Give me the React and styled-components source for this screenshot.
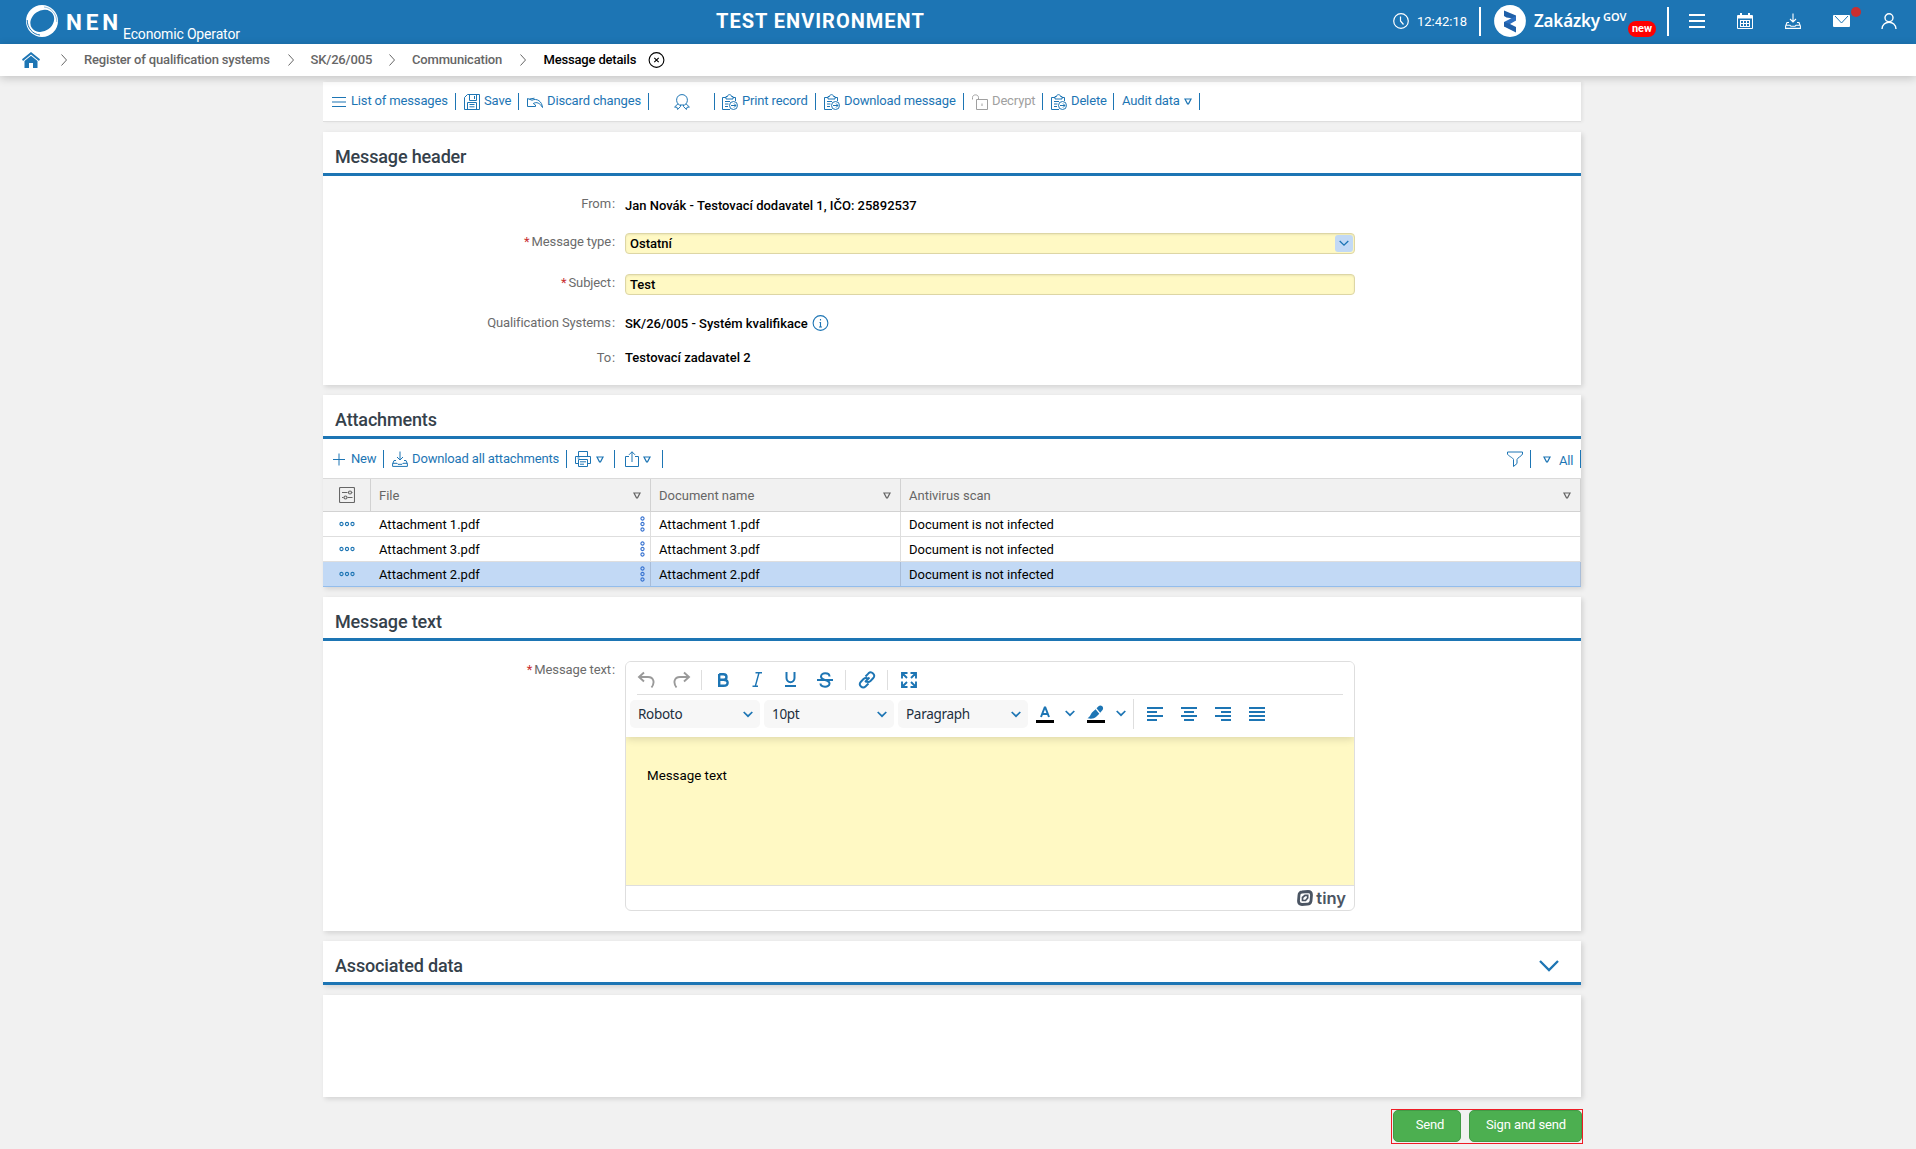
import React from "react";
import styled, { createGlobalStyle, css } from "styled-components";

const BLUE = "#1d75b4";

const Global = createGlobalStyle`
  * { box-sizing: border-box; }
  html, body { margin: 0; padding: 0; }
  body {
    background: #f1f1f1;
    font-family: Roboto, "Liberation Sans", sans-serif;
    font-size: 13px;
    color: #000;
    overflow: hidden;
  }
`;

const Page = styled.div`
  width: 1916px;
  height: 1149px;
  overflow: hidden;
`;

const Svg = styled.svg`
  display: block;
  flex: none;
  fill: none;
  stroke: currentColor;
  stroke-width: ${(p) => p.$sw ?? 1};
`;

const Icon = ({ w = 16, h = 16, sw, children }) => (
  <Svg width={w} height={h} viewBox={`0 0 ${w} ${h}`} $sw={sw}>
    {children}
  </Svg>
);

/* ---------- top bar ---------- */

const TopBar = styled.header`
  display: grid;
  grid-template-columns: 716px 1fr 523px;
  height: 44px;
  background: ${BLUE};
  color: #fff;
`;

const Brand = styled.div`
  display: flex;
  align-items: flex-start;
  padding: 5px 0 0 26px;
`;

const BrandName = styled.span`
  margin: 3px 0 0 8px;
  width: 57px;
  font-size: 22.5px;
  line-height: 28px;
  font-weight: 700;
  letter-spacing: 3.9px;
`;

const BrandRole = styled.span`
  margin-top: 19px;
  font-size: 14px;
  line-height: 20px;
  letter-spacing: -0.16px;
  white-space: nowrap;
`;

const EnvTitle = styled.div`
  font-size: 20px;
  font-weight: 700;
  line-height: 43px;
  letter-spacing: 1px;
  white-space: nowrap;
`;

const TopTools = styled.div`
  display: flex;
  align-items: center;
  height: 42px;
`;

const Clock = styled.div`
  display: flex;
  align-items: center;
  gap: 8px;
  width: 86px;
  font-size: 13px;
`;

const Bar = styled.span`
  width: 2px;
  height: 29px;
  margin-top: 1px;
  background: #fff;
`;

const Portal = styled.div`
  display: flex;
  align-items: center;
  width: 186px;
  padding-left: 13px;
  font-family: "Noto Sans", "Open Sans", sans-serif;
  font-weight: 600;
`;

const PortalName = styled.span`
  margin-left: 8px;
  width: 69px;
  font-size: 17px;
  line-height: 24px;
  letter-spacing: -0.2px;
`;

const PortalSup = styled.span`
  width: 25px;
  font-size: 11px;
  line-height: 12px;
  margin-bottom: 8px;
`;

const NewBadge = styled.span`
  width: 28px;
  height: 16px;
  margin-top: 16px;
  border-radius: 8px;
  background: #f00;
  font: 700 11px/15px Roboto, sans-serif;
  text-align: center;
`;

const ToolButton = styled.span`
  display: flex;
  justify-content: center;
  width: 48px;
`;

const ToolRow = styled.div`
  display: flex;
  align-items: center;
  padding-left: 4px;
`;

const MailWrap = styled.span`
  position: relative;
  display: block;
`;

const Dot = styled.span`
  position: absolute;
  left: 18px;
  top: -8px;
  width: 10px;
  height: 10px;
  border-radius: 50%;
  background: #c92f31;
`;

/* ---------- breadcrumb ---------- */

const Crumbs = styled.nav`
  position: relative;
  display: flex;
  align-items: center;
  height: 32px;
  padding-left: 22px;
  background: #fff;
  box-shadow: 0 2px 10px rgba(0, 0, 0, 0.2);
  font-size: 13px;
  font-weight: 500;
  color: #666;
`;

const Crumb = styled.span`
  width: ${(p) => p.$w}px;
  margin-top: -1px;
  white-space: nowrap;
  letter-spacing: -0.17px;
  color: ${(p) => (p.$current ? "#000" : "inherit")};
`;

const CrumbSep = styled.span`
  display: flex;
  width: ${(p) => p.$w || 23}px;
  color: #666;
`;

/* ---------- panels ---------- */

const Content = styled.main`
  width: 1258px;
  margin: 6px 0 0 323px;
`;

const Panel = styled.section`
  height: ${(p) => p.$h}px;
  margin-bottom: 10px;
  background: #fff;
  box-shadow: 2px 2px 5px rgba(0, 0, 0, 0.13);
`;

const ActionPanel = styled.div`
  display: flex;
  height: 40px;
  margin-bottom: 10px;
  padding-top: 11px;
  background: #fff;
  border-bottom: 1px solid #dedede;
  box-shadow: 2px 0 3px rgba(0, 0, 0, 0.06);
`;

const PanelHead = styled.div`
  display: flex;
  justify-content: space-between;
  align-items: center;
  height: 44px;
  padding: 6px 22px 0 12px;
  border-bottom: 3px solid ${BLUE};
  color: #35414b;
`;

const PanelTitle = styled.h2`
  margin: 3px 0 0;
  font-size: 18px;
  line-height: 22px;
  font-weight: 500;
  letter-spacing: -0.15px;
`;

const Action = styled.button`
  display: flex;
  align-items: center;
  gap: ${(p) => p.$gap ?? 4}px;
  width: ${(p) => p.$w}px;
  height: ${(p) => p.$h || 17}px;
  padding: 0 0 0 ${(p) => p.$pl ?? 8}px;
  border: 0;
  border-right: 1px solid ${BLUE};
  background: none;
  color: ${BLUE};
  font: 400 13px/15px Roboto, sans-serif;
  white-space: nowrap;
`;

const ActionText = styled.span`
  margin-top: ${(p) => p.$mt ?? -2}px;
  letter-spacing: -0.15px;
  color: ${(p) => (p.$off ? "#a0a0a0" : "inherit")};
`;

const Muted = styled.span`
  color: #a0a0a0;
`;

/* ---------- form ---------- */

const Form = styled.div`
  padding-top: ${(p) => p.$pt || 0}px;
`;

const Field = styled.div`
  display: flex;
  height: ${(p) => p.$h}px;
`;

const Label = styled.label`
  width: 292px;
  margin: ${(p) => p.$mt || 0}px 10px 0 0;
  text-align: right;
  line-height: 20px;
  letter-spacing: -0.11px;
  color: #6b6b6b;
  white-space: nowrap;
`;

const Colon = styled.span`
  margin-left: 1px;
`;

const Star = styled.span`
  margin-right: 2px;
  color: #c92f31;
`;

const Value = styled.div`
  display: flex;
  align-items: center;
  gap: 4px;
  height: 20px;
  margin-top: ${(p) => p.$mt || 0}px;
  font-weight: 500;
  white-space: nowrap;
`;

const Input = styled.div`
  display: flex;
  align-items: center;
  justify-content: space-between;
  width: 730px;
  height: 21px;
  margin-top: 1px;
  padding: 0 1px 0 4px;
  border: 1px solid #ddd6a5;
  border-radius: 4px;
  background: #fff9c4;
  box-shadow: inset 0 1px 2px rgba(0, 0, 0, 0.08);
  font-weight: 500;
`;

const DropButton = styled.span`
  display: flex;
  align-items: center;
  justify-content: center;
  width: 18px;
  height: 17px;
  border-radius: 3px;
  background: #c2d9f5;
  color: ${BLUE};
`;

/* ---------- table ---------- */

const TableTools = styled.div`
  display: flex;
  justify-content: space-between;
  height: 39px;
  padding-top: 11px;
`;

const ToolGroup = styled.div`
  display: flex;
`;

const gridCols = css`
  display: grid;
  grid-template-columns: 48px 280px 250px 680px;
`;

const HeadRow = styled.div`
  ${gridCols}
  height: 34px;
  border-top: 1px solid #dadada;
  border-bottom: 1px solid #d2d2d2;
  background: #f1f1f1;
  color: #666;
`;

const HeadCell = styled.div`
  display: flex;
  align-items: center;
  justify-content: ${(p) => (p.$center ? "center" : "space-between")};
  padding: ${(p) => (p.$center ? "0" : "0 9px 0 8px")};
  border-right: 1px solid #d2d2d2;
`;

const Row = styled.div`
  ${gridCols}
  height: 25px;
  border-bottom: 1px solid ${(p) => (p.$sel ? "#93bdec" : "#dedede")};
  background: ${(p) => (p.$sel ? "#c2d9f5" : "#fff")};
`;

const Cell = styled.div`
  display: flex;
  align-items: center;
  justify-content: space-between;
  padding: 0 5px 0 8px;
  border-right: 1px solid ${(p) => (p.$sel ? "#a9bdd8" : "#dedede")};
`;

const MenuCell = styled.div`
  display: flex;
  align-items: center;
  justify-content: center;
  color: ${BLUE};
`;

/* ---------- editor ---------- */

const Editor = styled.div`
  width: 730px;
  height: 250px;
  border: 1px solid #dedede;
  border-radius: 6px;
  overflow: hidden;
  background: #fff;
`;

const EdRow = styled.div`
  display: flex;
  align-items: center;
  height: ${(p) => p.$h}px;
  margin: 0 11px;
  border-bottom: ${(p) => (p.$line ? "1px solid #dedede" : "0")};
  color: ${BLUE};
`;

const EdToolbar = styled.div`
  position: relative;
  height: 75px;
  background: #fff;
  box-shadow: 0 2px 8px rgba(0, 0, 0, 0.14);
`;

const EdButton = styled.span`
  display: flex;
  flex: none;
  align-items: center;
  justify-content: center;
  width: ${(p) => p.$w}px;
  height: 28px;
  margin: ${(p) => p.$mt ?? 3}px 0 0 ${(p) => p.$ml || 0}px;
  color: ${(p) => (p.$off ? "#9a9a9a" : BLUE)};
`;

const EdSep = styled.span`
  width: 1px;
  height: ${(p) => p.$h || 20}px;
  margin: 3px 0 0 ${(p) => p.$ml || 0}px;
  background: #dedede;
`;

const EdSecond = styled(EdRow)`
  margin: 0 0 0 4px;
`;

const EdSelect = styled.span`
  display: flex;
  align-items: center;
  justify-content: space-between;
  width: 130px;
  height: 28px;
  margin: 4px 4px 0 0;
  padding: 0 7px 0 8px;
  border-radius: 5px;
  background: #f7f7f7;
  font: 400 13.5px/28px "Noto Sans", sans-serif;
  letter-spacing: -0.3px;
  color: #222f3e;
`;

const EdBody = styled.div`
  height: 148px;
  padding: 29px 21px;
  background: #fff9c4;
  font-size: 13.33px;
  line-height: 20px;
`;

const EdStatus = styled.div`
  display: flex;
  align-items: center;
  justify-content: flex-end;
  gap: 3px;
  height: 25px;
  padding: 0 8px 0 0;
  border-top: 1px solid #dedede;
  color: #4b5563;
  font: 600 16.5px/22px Inter, sans-serif;
`;

/* ---------- footer buttons ---------- */

const Submit = styled.div`
  display: flex;
  gap: 8px;
  width: 192px;
  height: 35px;
  margin: 12px 0 0 1068px;
  padding-left: 1px;
  border: 1px solid #ee1c25;
`;

const GreenButton = styled.button`
  width: ${(p) => p.$w}px;
  height: 32px;
  padding: 0 0 3px ${(p) => p.$pl || 0}px;
  border: 1px solid #429a46;
  border-radius: 5px;
  background: #4caf50;
  color: #fff;
  font: 400 13px/18px Roboto, sans-serif;
  letter-spacing: -0.1px;
`;

/* ---------- icons ---------- */

const Tri = () => (
  <Icon w={8} h={7} sw={1.2}>
    <path d="M1 1H7L4.5 5.8H3.5Z" />
  </Icon>
);

const Chevron = ({ sw = 1.7 }) => (
  <Icon w={10} h={7} sw={sw}>
    <path d="M0.7 1L5 5.2L9.3 1" />
  </Icon>
);

const CrumbArrow = () => (
  <Icon w={7} h={12} sw={1}>
    <path d="M.5 .5L5.500 6L.5 11.500" />
  </Icon>
);

const ListIcon = () => (
  <Icon w={14} sw={1.1}>
    <path d="M0 3.5H14M0 8H14M0 12.5H14" />
  </Icon>
);

const SaveIcon = () => (
  <Icon>
    <path d="M3.5 .5H15.5V15.5H.5V3.5ZM5.5 .5V6.5H12.5V.5M10.5 2V5M3.5 15.5V8.5H12.5V15.5M5.5 10.5H10.5M5.5 12.8H10.5" />
  </Icon>
);

const DiscardIcon = () => (
  <Icon>
    <path d="M.5 4.500V12.500H8.500V11L6.300 9.500C9.500 7.500 13 9 15.500 13.500C15 7.500 10 3.800 5 6.200L.5 4.500M2.500 5L7.500 4.200" />
  </Icon>
);

const RibbonIcon = () => (
  <Icon sw={1}>
    <path d="M5.500 11C.8 8.500 2 .6 8 .6S15.200 8.500 10.500 11ZM4 9.800L.6 13L3 13.300L3.600 15.500L6.500 12.500V11M12 9.800L15.400 13L13 13.300L12.400 15.500L9.500 12.500V11" />
  </Icon>
);

const ClipIcon = () => (
  <Icon>
    <path d="M8 15.500H.5V3.500H4V2.500H5.500C5.500 0 9.500 0 9.500 2.500H11V3.500H13.500V7M4 3.500V5H11V3.500M3 7.500H8M3 10H6.500M3 12.500H6" />
    <circle cx="11.500" cy="11.500" r="4" />
    <path d="M9 11.500H14M12 9.500L14 11.500L12 13.500" />
  </Icon>
);

const LockIcon = () => (
  <Icon>
    <path d="M4.500 5.500H15.500V15.500H4.500ZM.5 5.500V3.500C.5 0 6.500 0 6.500 3.500V5.500M10 9.500V12" />
  </Icon>
);

const InboxIcon = ({ sw = 1 }) => (
  <Icon sw={sw}>
    <path d="M8 .5V9M5 6L8 9L11 6M4 9.500H2L.6 13V15.400H15.400V13L14 9.500H12M.6 12.300H5L6 13.300H10L11 12.300H15.400" />
  </Icon>
);

const PrinterIcon = () => (
  <Icon>
    <path d="M3.500 5V.5H12.500V5M3.500 12.500H.5V5.500H15.500V12.500H12.500M3.500 8.500H12.500V15.500H3.500ZM5 10.800H11M5 13.200H9M2.500 7H4.500" />
  </Icon>
);

const ShareIcon = () => (
  <Icon w={14}>
    <path d="M4 5.500H.5V15.500H13.500V5.500H10M7 11V.8M4 3.800L7 .8L10 3.800" />
  </Icon>
);

const FilterIcon = () => (
  <Icon>
    <path d="M.5 1H15.500V3C15.500 4.500 10 7 10 8.500V12.500L6.500 15.500V8.500C6.500 7 .5 4.500 .5 3Z" />
  </Icon>
);

const SettingsIcon = () => (
  <Icon sw={1.1}>
    <rect x=".5" y=".5" width="15" height="15" rx="1" />
    <path d="M3 5.500H8.500M12.500 5.500H13.500M3 10.500H4.500M8.500 10.500H13.500" />
    <circle cx="11" cy="5.500" r="1.500" />
    <circle cx="6.500" cy="10.500" r="1.500" />
  </Icon>
);

const DotsH = () => (
  <Icon w={16} h={6} sw={1.1}>
    {[2.5, 8, 13.5].map((x) => (
      <circle key={x} cx={x} cy="3" r="1.600" />
    ))}
  </Icon>
);

const DotsV = () => (
  <Icon w={5} h={16} sw={1.1}>
    <g stroke="#3571d0">
      {[2.5, 8, 13.5].map((y) => (
        <circle key={y} cx="2.500" cy={y} r="1.600" />
      ))}
    </g>
  </Icon>
);

const Align = ({ kind }) => {
  const start = { left: 0, center: 3, right: 6, full: 0 }[kind];
  const len = kind === "full" ? 16 : 10;
  return (
    <Icon w={16} h={14} sw={2}>
      <path d={`M0 1H16M${start} 5H${start + len}M0 9H16M${start} 13H${start + len}`} />
    </Icon>
  );
};

const crumbs = [
  ["Register of qualification systems", 203.5, 23],
  ["SK/26/005", 78, 23.5],
  ["Communication", 108, 23.5],
];

const rows = ["Attachment 1.pdf", "Attachment 3.pdf", "Attachment 2.pdf"];

export default function App() {
  return (
    <Page>
      <Global />
      <TopBar>
        <Brand>
          <Icon w={32} h={32} sw={0}>
            <circle cx="16" cy="16" r="16" fill="#fff" />
            <ellipse cx="16.300" cy="16" rx="12.600" ry="10.300" fill={BLUE} transform="rotate(-35 16 16)" />
            <path d="M1.200 15C1.200 23 7 29.500 14 30" stroke={BLUE} strokeWidth="1" fill="none" />
            <path d="M30.800 17C30.800 9 25 2.500 18 2" stroke={BLUE} strokeWidth=".8" fill="none" opacity=".6" />
          </Icon>
          <BrandName>NEN</BrandName>
          <BrandRole>Economic Operator</BrandRole>
        </Brand>
        <EnvTitle>TEST ENVIRONMENT</EnvTitle>
        <TopTools>
          <Clock>
            <Icon sw={1.2}>
              <circle cx="8" cy="8" r="7.300" />
              <path d="M7.500 3.500V8L10.500 11.500" />
            </Icon>
            12:42:18
          </Clock>
          <Bar />
          <Portal>
            <Icon w={32} h={32} sw={0}>
              <circle cx="16" cy="16" r="15.900" fill="#fff" />
              <path d="M10 5.500L22 10.500V15.500L16 13L12.500 12.500L10 11Z" fill="#1f5fa8" />
              <path d="M22 11V15.500L16 19L10 21.500V17Z" fill="#2d6fc0" />
              <path d="M10 17L16 19L22 22V27.500L10 21.500Z" fill="#1f5fa8" />
            </Icon>
            <PortalName>Zakázky</PortalName>
            <PortalSup>GOV</PortalSup>
            <NewBadge>new</NewBadge>
          </Portal>
          <Bar />
          <ToolRow>
            <ToolButton>
              <Icon sw={2}>
                <path d="M0 2H16M0 8H16M0 14H16" />
              </Icon>
            </ToolButton>
            <ToolButton>
              <Icon sw={1}>
                <path d="M.5 2.500H15.500V15.500H.5Z" />
                <path d="M1 3H15V5H1Z" fill="currentColor" />
                <path d="M4 0V4M12 0V4" strokeWidth="2" />
                <path d="M3 7.500H13M3 10.500H13M3 13.500H13M3.500 7V14M6.500 7V14M9.500 7V14M12.500 7V14" />
              </Icon>
            </ToolButton>
            <ToolButton>
              <InboxIcon sw={1.1} />
            </ToolButton>
            <ToolButton>
              <MailWrap>
                <Icon w={17} h={12}>
                  <rect width="17" height="12" rx="1" fill="#fff" stroke="none" />
                  <path d="M2 1L8.500 8L15 1" stroke={BLUE} />
                </Icon>
                <Dot />
              </MailWrap>
            </ToolButton>
            <ToolButton>
              <Icon sw={1.400}>
                <circle cx="8" cy="4.800" r="4" />
                <path d="M1 16C1 7 15 7 15 16" />
              </Icon>
            </ToolButton>
          </ToolRow>
        </TopTools>
      </TopBar>

      <Crumbs>
        <CrumbSep $w={39}>
          <Icon w={18} h={16} sw={0}>
            <path
              fill={BLUE}
              d="M9 0L18 7.300L17 9L9 2.500L1 9L0 7.300ZM9 3.800L15.500 9V16H11V11H7V16H2.500V9Z"
            />
          </Icon>
        </CrumbSep>
        <CrumbSep><CrumbArrow /></CrumbSep>
        {crumbs.map(([label, w, sep]) => (
          <React.Fragment key={label}>
            <Crumb $w={w}>{label}</Crumb>
            <CrumbSep $w={sep}><CrumbArrow /></CrumbSep>
          </React.Fragment>
        ))}
        <Crumb $w={104.5} $current>
          Message details
        </Crumb>
        <Icon w={17} h={16} sw={1.1}>
          <g stroke="#000">
            <circle cx="8.500" cy="8" r="7.400" />
            <path d="M6.300 5.800L10.700 10.200M10.700 5.800L6.300 10.200" />
          </g>
        </Icon>
      </Crumbs>

      <Content>
        <ActionPanel>
          <Action $w={133} $pl={9} $gap={5}><ListIcon /><ActionText>List of messages</ActionText></Action>
          <Action $w={63}><SaveIcon /><ActionText>Save</ActionText></Action>
          <Action $w={130}><DiscardIcon /><ActionText>Discard changes</ActionText></Action>
          <Action $w={66} $pl={25}><RibbonIcon /></Action>
          <Action $w={101} $pl={7}><ClipIcon /><ActionText>Print record</ActionText></Action>
          <Action $w={148}><ClipIcon /><ActionText>Download message</ActionText></Action>
          <Action $w={79}><Muted><LockIcon /></Muted><ActionText $off>Decrypt</ActionText></Action>
          <Action $w={71}><ClipIcon /><ActionText>Delete</ActionText></Action>
          <Action $w={86} $pl={8}><ActionText>Audit data</ActionText><Tri /></Action>
        </ActionPanel>

        <Panel $h={253}>
          <PanelHead><PanelTitle>Message header</PanelTitle></PanelHead>
          <Form $pt={18}>
            <Field $h={38}>
              <Label>From<Colon>:</Colon></Label>
              <Value $mt={1}>Jan Novák - Testovací dodavatel 1, IČO: 25892537</Value>
            </Field>
            <Field $h={41}>
              <Label><Star>*</Star>Message type<Colon>:</Colon></Label>
              <Input>Ostatní<DropButton><Chevron sw={1.3} /></DropButton></Input>
            </Field>
            <Field $h={40}>
              <Label><Star>*</Star>Subject<Colon>:</Colon></Label>
              <Input>Test</Input>
            </Field>
            <Field $h={35}>
              <Label>Qualification Systems<Colon>:</Colon></Label>
              <Value>
                SK/26/005 - Systém kvalifikace
                <Icon w={17} h={16} sw={1.1}>
                  <g stroke={BLUE}>
                    <circle cx="8.500" cy="8" r="7.400" />
                    <path d="M8.500 4V5.500M7.500 7.500H8.500V12M7 12H10" />
                  </g>
                </Icon>
              </Value>
            </Field>
            <Field $h={20}>
              <Label>To<Colon>:</Colon></Label>
              <Value $mt={-1}>Testovací zadavatel 2</Value>
            </Field>
          </Form>
        </Panel>

        <Panel $h={192}>
          <PanelHead><PanelTitle>Attachments</PanelTitle></PanelHead>
          <TableTools>
            <ToolGroup>
              <Action $h={18} $w={61} $pl={10} $gap={6}>
                <Icon w={12} h={13}><path d="M6 .5V12.500M0 6.500H12" /></Icon>
                <ActionText>New</ActionText>
              </Action>
              <Action $h={18} $w={183} $pl={8}><InboxIcon /><ActionText>Download all attachments</ActionText></Action>
              <Action $h={18} $w={48} $gap={5}><PrinterIcon /><Tri /></Action>
              <Action $h={18} $w={48} $pl={10}><ShareIcon /><Tri /></Action>
            </ToolGroup>
            <ToolGroup>
              <Action $h={18} $w={31} $pl={7}><FilterIcon /></Action>
              <Action $h={18} $w={50} $pl={12} $gap={8}><Tri /><ActionText $mt={2}>All</ActionText></Action>
            </ToolGroup>
          </TableTools>
          <HeadRow>
            <HeadCell $center><SettingsIcon /></HeadCell>
            <HeadCell>File<Tri /></HeadCell>
            <HeadCell>Document name<Tri /></HeadCell>
            <HeadCell>Antivirus scan<Tri /></HeadCell>
          </HeadRow>
          {rows.map((name, i) => (
            <Row key={name} $sel={i === 2}>
              <MenuCell><DotsH /></MenuCell>
              <Cell $sel={i === 2}>{name}<DotsV /></Cell>
              <Cell $sel={i === 2}>{name}</Cell>
              <Cell $sel={i === 2}>Document is not infected</Cell>
            </Row>
          ))}
        </Panel>

        <Panel $h={334}>
          <PanelHead><PanelTitle>Message text</PanelTitle></PanelHead>
          <Form $pt={20}>
            <Field $h={250}>
              <Label $mt={-1}><Star>*</Star>Message text<Colon>:</Colon></Label>
              <Editor>
                <EdToolbar>
                  <EdRow $h={33} $line>
                    <EdButton $off $w={18}>
                      <Icon w={18} h={18} sw={1.9}><path d="M7 1.500L2 6L7 10.500M2 6H11C17 6 18 12 14.500 16.500" /></Icon>
                    </EdButton>
                    <EdButton $off $w={18} $ml={18}>
                      <Icon w={18} h={18} sw={1.9}><path d="M11 1.500L16 6L11 10.500M16 6H7C1 6 0 12 3.500 16.500" /></Icon>
                    </EdButton>
                    <EdSep $ml={10} />
                    <EdButton $w={12} $ml={15}>
                      <Icon w={12} h={14} sw={2.4}><path d="M2.200 1.200H6.500C10.500 1.200 10.500 6.700 6.500 6.700H2.200M6.500 6.700C12 6.700 12 12.800 6.500 12.800H2.200V1" /></Icon>
                    </EdButton>
                    <EdButton $w={10} $ml={23}>
                      <Icon w={10} h={15} sw={1.4}><path d="M3.500 .8H10M.5 14.200H6M7 .8L3.300 14.200" /></Icon>
                    </EdButton>
                    <EdButton $w={11} $ml={23}>
                      <Icon w={11} h={15} sw={2}><path d="M1.500 0V6C1.500 11.500 9.500 11.500 9.500 6V0M0 14H11" /></Icon>
                    </EdButton>
                    <EdButton $w={16} $ml={21}>
                      <Icon w={16} h={16} sw={2}><path d="M0 8H16M12.500 4.500C12.500 .5 4 0 4 4.500C4 7 7 7.500 8 8C10.500 8.700 12.500 9.500 12.500 11.500C12.500 16 3.500 15.500 3.500 11.500" /></Icon>
                    </EdButton>
                    <EdSep $ml={12} />
                    <EdButton $w={18} $ml={12}>
                      <Icon w={18} h={18} sw={1.9}><path d="M7.500 5.500L10.500 2.300C13.500 -.5 18 4 15.300 7L12.500 10C11 11.300 9 11 8 10M10.500 12.500L7.500 15.500C4.500 18.500 0 14 2.700 11L5.500 8C7 6.700 9 7 10 8M7 11L11.500 6.500" /></Icon>
                    </EdButton>
                    <EdSep $ml={11} />
                    <EdButton $w={16} $ml={13}>
                      <Icon w={16} h={16} sw={1.9}><path d="M1 6.500V1H6.500M9.500 1H15V6.500M15 9.500V15H9.500M6.500 15H1V9.500M1.500 1.500L6 6M14.500 1.500L10 6M1.500 14.500L6 10M14.500 14.500L10 10" /></Icon>
                    </EdButton>
                  </EdRow>
                  <EdSecond $h={34}>
                    <EdSelect>Roboto<EdButton $w={10} $mt={0}><Chevron /></EdButton></EdSelect>
                    <EdSelect>10pt<EdButton $w={10} $mt={0}><Chevron /></EdButton></EdSelect>
                    <EdSelect>Paragraph<EdButton $w={10} $mt={0}><Chevron /></EdButton></EdSelect>
                    <EdButton $w={18} $ml={4}>
                      <Icon w={18} h={18} sw={2}>
                        <path d="M5 12L8.700 2.500H9.300L13 12M6 9H12" />
                        <path d="M0 16.500H18" stroke="#000" strokeWidth="3" />
                      </Icon>
                    </EdButton>
                    <EdButton $w={10} $ml={11}><Chevron /></EdButton>
                    <EdButton $w={18} $ml={12}>
                      <Icon w={18} h={18} sw={0}>
                        <path d="M9.500 3.300L11.500 1.200C14 -.8 17.500 2 15.500 5L13.200 7.800ZM8.600 4.200L12.300 8.700L9.500 11.500C7 14 3.500 14 .5 13.200C3 12 3.800 9 5 7.500Z" fill={BLUE} />
                        <path d="M0 15H18V18H0Z" fill="#000" />
                      </Icon>
                    </EdButton>
                    <EdButton $w={10} $ml={11}><Chevron /></EdButton>
                    <EdSep $ml={7} $h={30} />
                    <EdButton $w={16} $ml={13}><Align kind="left" /></EdButton>
                    <EdButton $w={16} $ml={18}><Align kind="center" /></EdButton>
                    <EdButton $w={16} $ml={18}><Align kind="right" /></EdButton>
                    <EdButton $w={16} $ml={18}><Align kind="full" /></EdButton>
                  </EdSecond>
                </EdToolbar>
                <EdBody>Message text</EdBody>
                <EdStatus>
                  <Icon w={16} h={16} sw={2.8}>
                    <path d="M5 2L11 1.500C13.500 1.500 14.500 3 14.500 5L14 11C13.500 13.500 12 14.200 10.500 14.200L5 14.500C2.500 14.500 1.500 13 1.500 11L2 5C2 3 3.500 2 5 2Z" />
                    <path d="M5.500 10.500V7.500L8 5.300H10.700V8L8.500 10.500Z" strokeWidth="1.700" />
                  </Icon>
                  tiny
                </EdStatus>
              </Editor>
            </Field>
          </Form>
        </Panel>

        <Panel $h={44}>
          <PanelHead>
            <PanelTitle>Associated data</PanelTitle>
            <EdButton $w={20}>
              <Icon w={20} h={12} sw={2.3}><path d="M1 1L10 10L19 1" /></Icon>
            </EdButton>
          </PanelHead>
        </Panel>

        <Panel $h={102} />

        <Submit>
          <GreenButton $w={68} $pl={6}>Send</GreenButton>
          <GreenButton $w={113} $pl={1}>Sign and send</GreenButton>
        </Submit>
      </Content>
    </Page>
  );
}
